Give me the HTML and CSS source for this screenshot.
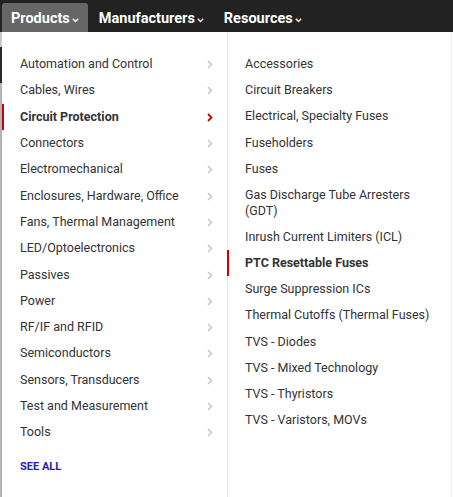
FILE: index.html
```html
<!DOCTYPE html>
<html>
<head>
<meta charset="utf-8">
<link rel="stylesheet" href="styles.css">
</head>
<body>
<nav class="topnav">
  <a class="tab active">Products<svg class="caret" width="7" height="5" viewBox="0 0 7 5"><polyline points="0.8,0.8 3.5,3.6 6.2,0.8" fill="none" stroke="#fff" stroke-width="1.4"/></svg></a>
  <a class="tab">Manufacturers<svg class="caret" width="7" height="5" viewBox="0 0 7 5"><polyline points="0.8,0.8 3.5,3.6 6.2,0.8" fill="none" stroke="#fff" stroke-width="1.4"/></svg></a>
  <a class="tab">Resources<svg class="caret" width="7" height="5" viewBox="0 0 7 5"><polyline points="0.8,0.8 3.5,3.6 6.2,0.8" fill="none" stroke="#fff" stroke-width="1.4"/></svg></a>
</nav>
<div class="menu">
  <ul class="cats">
    <li class="cat"><span>Automation and Control</span><svg class="chev" width="6" height="9" viewBox="0 0 6 9"><polyline points="1,1 4.5,4.5 1,8" fill="none" stroke-width="1.6"/></svg></li>
    <li class="cat"><span>Cables, Wires</span><svg class="chev" width="6" height="9" viewBox="0 0 6 9"><polyline points="1,1 4.5,4.5 1,8" fill="none" stroke-width="1.6"/></svg></li>
    <li class="cat current"><span>Circuit Protection</span><svg class="chev" width="6" height="9" viewBox="0 0 6 9"><polyline points="1,1 4.5,4.5 1,8" fill="none" stroke-width="1.8"/></svg></li>
    <li class="cat"><span>Connectors</span><svg class="chev" width="6" height="9" viewBox="0 0 6 9"><polyline points="1,1 4.5,4.5 1,8" fill="none" stroke-width="1.6"/></svg></li>
    <li class="cat"><span>Electromechanical</span><svg class="chev" width="6" height="9" viewBox="0 0 6 9"><polyline points="1,1 4.5,4.5 1,8" fill="none" stroke-width="1.6"/></svg></li>
    <li class="cat"><span>Enclosures, Hardware, Office</span><svg class="chev" width="6" height="9" viewBox="0 0 6 9"><polyline points="1,1 4.5,4.5 1,8" fill="none" stroke-width="1.6"/></svg></li>
    <li class="cat"><span>Fans, Thermal Management</span><svg class="chev" width="6" height="9" viewBox="0 0 6 9"><polyline points="1,1 4.5,4.5 1,8" fill="none" stroke-width="1.6"/></svg></li>
    <li class="cat"><span>LED/Optoelectronics</span><svg class="chev" width="6" height="9" viewBox="0 0 6 9"><polyline points="1,1 4.5,4.5 1,8" fill="none" stroke-width="1.6"/></svg></li>
    <li class="cat"><span>Passives</span><svg class="chev" width="6" height="9" viewBox="0 0 6 9"><polyline points="1,1 4.5,4.5 1,8" fill="none" stroke-width="1.6"/></svg></li>
    <li class="cat"><span>Power</span><svg class="chev" width="6" height="9" viewBox="0 0 6 9"><polyline points="1,1 4.5,4.5 1,8" fill="none" stroke-width="1.6"/></svg></li>
    <li class="cat"><span>RF/IF and RFID</span><svg class="chev" width="6" height="9" viewBox="0 0 6 9"><polyline points="1,1 4.5,4.5 1,8" fill="none" stroke-width="1.6"/></svg></li>
    <li class="cat"><span>Semiconductors</span><svg class="chev" width="6" height="9" viewBox="0 0 6 9"><polyline points="1,1 4.5,4.5 1,8" fill="none" stroke-width="1.6"/></svg></li>
    <li class="cat"><span>Sensors, Transducers</span><svg class="chev" width="6" height="9" viewBox="0 0 6 9"><polyline points="1,1 4.5,4.5 1,8" fill="none" stroke-width="1.6"/></svg></li>
    <li class="cat"><span>Test and Measurement</span><svg class="chev" width="6" height="9" viewBox="0 0 6 9"><polyline points="1,1 4.5,4.5 1,8" fill="none" stroke-width="1.6"/></svg></li>
    <li class="cat"><span>Tools</span><svg class="chev" width="6" height="9" viewBox="0 0 6 9"><polyline points="1,1 4.5,4.5 1,8" fill="none" stroke-width="1.6"/></svg></li>
    <li class="seeall">SEE ALL</li>
  </ul>
  <ul class="subs">
    <li class="sub">Accessories</li>
    <li class="sub">Circuit Breakers</li>
    <li class="sub">Electrical, Specialty Fuses</li>
    <li class="sub">Fuseholders</li>
    <li class="sub">Fuses</li>
    <li class="sub">Gas Discharge Tube Arresters (GDT)</li>
    <li class="sub">Inrush Current Limiters (ICL)</li>
    <li class="sub current">PTC Resettable Fuses</li>
    <li class="sub">Surge Suppression ICs</li>
    <li class="sub">Thermal Cutoffs (Thermal Fuses)</li>
    <li class="sub">TVS - Diodes</li>
    <li class="sub">TVS - Mixed Technology</li>
    <li class="sub">TVS - Thyristors</li>
    <li class="sub">TVS - Varistors, MOVs</li>
  </ul>
</div>
</body>
</html>
```

FILE: styles.css
```css
* { box-sizing: border-box; }
html, body { margin: 0; padding: 0; background: #fff; }
body {
  font-family: Roboto, "Liberation Sans", Arial, sans-serif;
  width: 453px;
  height: 497px;
  overflow: hidden;
}
.topnav {
  display: flex;
  align-items: flex-end;
  gap: 2px;
  height: 32px;
  padding-left: 2px;
  background: #222222;
}
.tab {
  display: flex;
  align-items: center;
  gap: 2px;
  height: 29px;
  padding: 2px 9px 0;
  color: #fff;
  font-size: 14.5px;
  font-weight: 700;
  border-radius: 3px 3px 0 0;
}
.tab.active { background: #666666; }
.caret { margin-top: 3px; }

.menu {
  position: relative;
  display: grid;
  grid-template-columns: 227px 1fr;
  height: 465px;
}
.menu::before {
  content: "";
  position: absolute;
  left: 0;
  top: 0;
  width: 2px;
  height: 100%;
  background: linear-gradient(#c8c8c8 0, #c8c8c8 15px, #2a2a2a 15px, #2a2a2a 51px, #b4b4b4 51px);
}
.menu::after {
  content: "";
  position: absolute;
  right: 1px;
  top: 0;
  width: 1px;
  height: 100%;
  background: #f0f0f0;
}
ul { list-style: none; margin: 0; padding: 0; }
.cats {
  padding: 19px 14px 0 20px;
}
.cat {
  position: relative;
  display: flex;
  justify-content: space-between;
  align-items: center;
  height: 26.3px;
  font-size: 12.5px;
  color: #333;
  line-height: 16px;
}
.chev { stroke: #c8c8c8; margin-top: 1px; }
.cat.current { font-weight: 700; }
.cat.current .chev { stroke: #cc0000; }
.cat.current::before {
  content: "";
  position: absolute;
  left: -18px;
  top: 0;
  width: 2px;
  height: 100%;
  background: #cc0000;
}
.seeall {
  margin-top: 15px;
  font-size: 11px;
  font-weight: 700;
  color: #2323b8;
  line-height: 13px;
}
.subs {
  border-left: 1px solid #e6e6e6;
  padding: 19px 10px 0 17px;
}
.sub {
  position: relative;
  font-size: 12.5px;
  line-height: 16px;
  padding: 5.08px 0;
  color: #333;
}
.sub.current { font-weight: 700; }
.sub.current::before {
  content: "";
  position: absolute;
  left: -18px;
  top: 0;
  width: 2px;
  height: 100%;
  background: #cc0000;
}
```
